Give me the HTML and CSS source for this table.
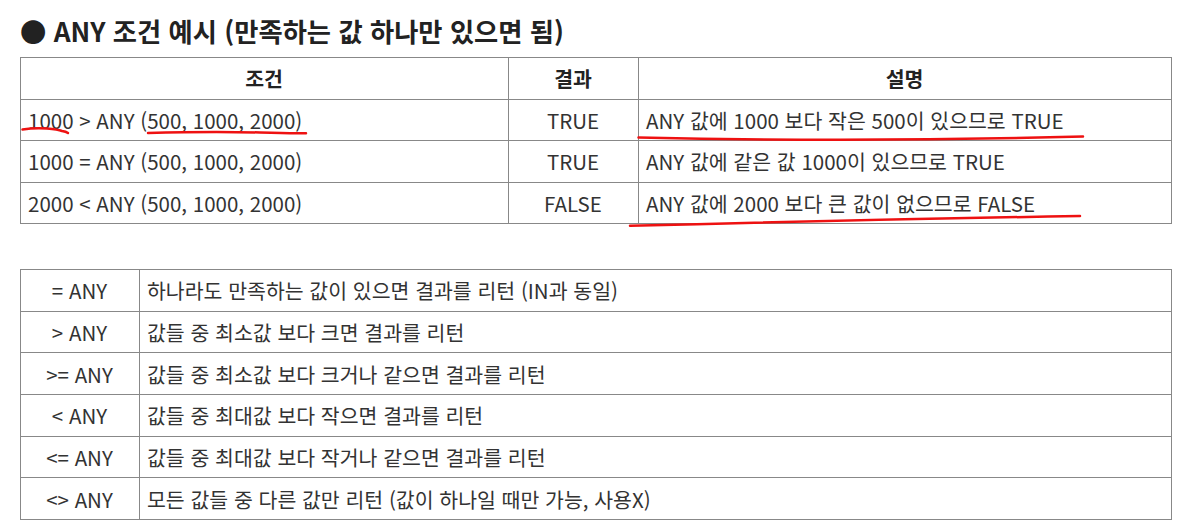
FILE: index.html
```html
<!DOCTYPE html>
<html lang="ko">
<head>
<meta charset="utf-8">
<title>ANY 조건 예시</title>
<link rel="stylesheet" href="styles.css">
</head>
<body>
<div class="page">
  <h2 class="title">● ANY 조건 예시 (만족하는 값 하나만 있으면 됨)</h2>
  <table class="grid grid-main">
    <colgroup>
      <col class="c-cond">
      <col class="c-res">
      <col class="c-desc">
    </colgroup>
    <thead>
      <tr><th>조건</th><th>결과</th><th>설명</th></tr>
    </thead>
    <tbody>
      <tr><td>1000 &gt; ANY (500, 1000, 2000)</td><td class="center">TRUE</td><td>ANY 값에 1000 보다 작은 500이 있으므로 TRUE</td></tr>
      <tr><td>1000 = ANY (500, 1000, 2000)</td><td class="center">TRUE</td><td>ANY 값에 같은 값 1000이 있으므로 TRUE</td></tr>
      <tr><td>2000 &lt; ANY (500, 1000, 2000)</td><td class="center">FALSE</td><td>ANY 값에 2000 보다 큰 값이 없으므로 FALSE</td></tr>
    </tbody>
  </table>

  <table class="grid grid-ops">
    <colgroup>
      <col class="c-op">
      <col class="c-text">
    </colgroup>
    <tbody>
      <tr><td class="center">= ANY</td><td>하나라도 만족하는 값이 있으면 결과를 리턴 (IN과 동일)</td></tr>
      <tr><td class="center">&gt; ANY</td><td>값들 중 최소값 보다 크면 결과를 리턴</td></tr>
      <tr><td class="center">&gt;= ANY</td><td>값들 중 최소값 보다 크거나 같으면 결과를 리턴</td></tr>
      <tr><td class="center">&lt; ANY</td><td>값들 중 최대값 보다 작으면 결과를 리턴</td></tr>
      <tr><td class="center">&lt;= ANY</td><td>값들 중 최대값 보다 작거나 같으면 결과를 리턴</td></tr>
      <tr><td class="center">&lt;&gt; ANY</td><td>모든 값들 중 다른 값만 리턴 (값이 하나일 때만 가능, 사용X)</td></tr>
    </tbody>
  </table>
</div>

<svg class="marks" width="1194" height="531" viewBox="0 0 1194 531" aria-hidden="true">
  <path d="M22.5 129.5 Q35 127.5 47 128.5 Q58 129.5 62 131 Q66 131.5 68 133" />
  <path d="M148 133 Q210 131.3 260 132.5 Q290 133.5 306 133.2" />
  <path d="M638.5 137.5 Q860 142.5 1083 136.5" />
  <path d="M630 225.8 Q850 220 1080 216" />
</svg>
</body>
</html>
```

FILE: styles.css
```css
html, body {
  margin: 0;
  padding: 0;
  background: #ffffff;
}

body {
  font-family: "Noto Sans CJK KR", "Noto Sans", sans-serif;
  color: #333333;
  position: relative;
}

.page {
  padding: 14px 0 0 20px;
}

.title {
  margin: 0 0 9px 0;
  font-size: 26.3px;
  line-height: 34px;
  font-weight: 700;
  color: #222222;
}

.grid {
  border-collapse: collapse;
  width: 1152px;
  table-layout: fixed;
  font-size: 20.5px;
}

.grid th,
.grid td {
  border: 1px solid #888888;
  height: 40.5px;
  padding: 0 8px 0 7px;
  line-height: 24px;
  text-align: left;
  vertical-align: middle;
  white-space: nowrap;
}

.grid th {
  text-align: center;
  font-weight: 700;
  color: #222222;
}

.grid .center {
  text-align: center;
}

.grid-main .c-cond { width: 488px; }
.grid-main .c-res  { width: 130px; }
.grid-main .c-desc { width: auto; }

.grid-ops {
  margin-top: 45px;
}

.grid-ops td {
  height: 40.67px;
}

.grid-ops .c-op { width: 119px; }
.grid-ops .c-text { width: auto; }

.marks {
  position: absolute;
  left: 0;
  top: 0;
  pointer-events: none;
}

.marks path {
  fill: none;
  stroke: #ee1111;
  stroke-width: 2.5;
  stroke-linecap: round;
}
```
